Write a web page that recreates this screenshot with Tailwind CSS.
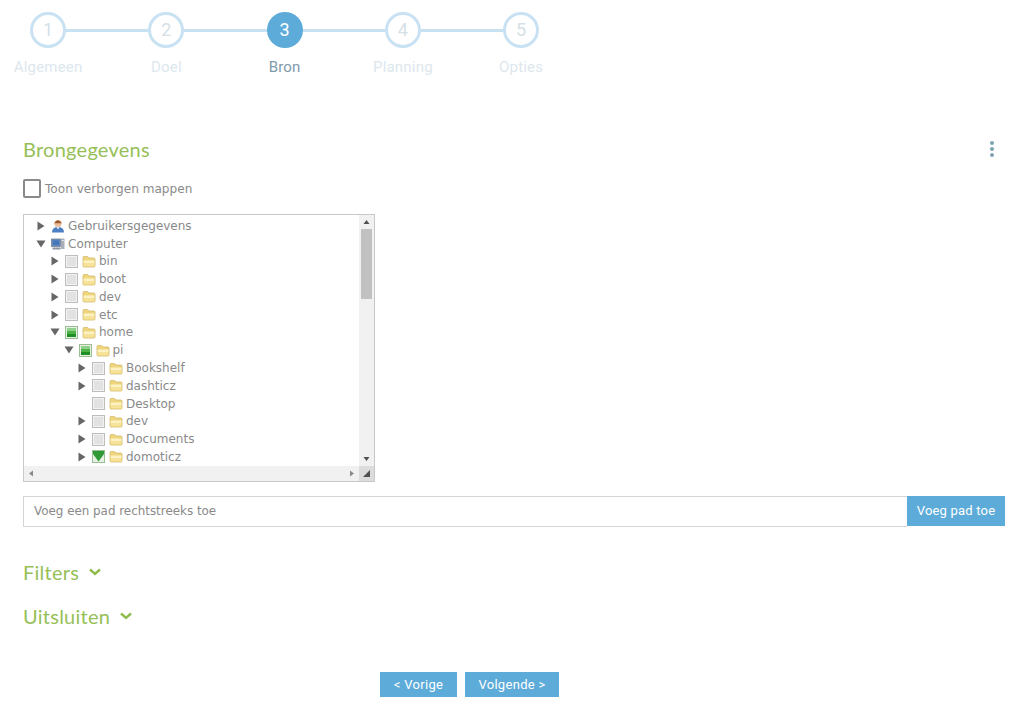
<!DOCTYPE html>
<html lang="nl">
<head>
    <meta charset="UTF-8">
    <title>Back-up taak</title>
    <script src="https://cdn.jsdelivr.net/npm/@tailwindcss/browser@4"></script>
</head>
<body class="bg-white overflow-hidden h-[706px] font-['DejaVu_Sans',sans-serif] text-[#8a8a8a]">

<!-- icon sprites -->
<svg class="hidden">
    <symbol id="folder" viewBox="0 0 14 13">
        <path d="M1 3.5 V11 a1 1 0 0 0 1 1 H12 a1 1 0 0 0 1-1 V4 a1 1 0 0 0-1-1 H7 L5.5 1.5 H2 a1 1 0 0 0-1 1z" fill="#efd67e" stroke="#d3bb6c" stroke-width="0.8"/>
        <path d="M1.6 5.5 H12.4 V8 H1.6z" fill="#fcf2c4"/>
        <path d="M1.6 8 H12.4 V11.4 H1.6z" fill="#f6e298"/>
    </symbol>
    <symbol id="closed" viewBox="0 0 10 10"><path d="M1.5 0.5 L8.5 5 L1.5 9.5z" fill="#666"/></symbol>
    <symbol id="open" viewBox="0 0 10 10"><path d="M0.5 1.5 H9.5 L5 8.5z" fill="#666"/></symbol>
    <symbol id="box" viewBox="0 0 13 13">
        <rect x="0.5" y="0.5" width="12" height="12" fill="#f2f2f2" stroke="#bdbdbd"/>
        <rect x="2" y="2" width="9" height="9" fill="#e2e2e2"/>
    </symbol>
    <symbol id="partial" viewBox="0 0 13 13">
        <rect x="0.5" y="0.5" width="12" height="12" fill="#e8f0e4" stroke="#9abd96"/>
        <rect x="2" y="2" width="9" height="3" fill="#8fd08a"/>
        <rect x="2" y="5" width="9" height="3" fill="#4db348"/>
        <rect x="2" y="8" width="9" height="3" fill="#1f8f24"/>
    </symbol>
    <symbol id="checked" viewBox="0 0 13 13">
        <rect x="0.5" y="0.5" width="12" height="12" fill="#e8f0e4" stroke="#9abd96"/>
        <path d="M1 1 H12 V4 L6.5 11.5 L1 4z" fill="#2f9a35"/>
    </symbol>
</svg>

<!-- Stepper -->
<div class="flex -ml-[11px] pt-3 font-['Roboto',sans-serif]">
    <div class="w-[118.25px] flex flex-col items-center relative">
        <div class="absolute top-[17px] left-1/2 w-full h-[3px] bg-[#c9e2f3]"></div>
        <div class="relative w-9 h-9 rounded-full border-[3px] border-[#c9e2f3] bg-white flex items-center justify-center text-lg text-[#d5dfe6]">1</div>
        <div class="mt-[9px] text-[15px] leading-5 tracking-[0.2px] text-[#dde7ee]">Algemeen</div>
    </div>
    <div class="w-[118.25px] flex flex-col items-center relative">
        <div class="absolute top-[17px] left-1/2 w-full h-[3px] bg-[#c9e2f3]"></div>
        <div class="relative w-9 h-9 rounded-full border-[3px] border-[#c9e2f3] bg-white flex items-center justify-center text-lg text-[#d5dfe6]">2</div>
        <div class="mt-[9px] text-[15px] leading-5 tracking-[0.2px] text-[#dde7ee]">Doel</div>
    </div>
    <div class="w-[118.25px] flex flex-col items-center relative">
        <div class="absolute top-[17px] left-1/2 w-full h-[3px] bg-[#c9e2f3]"></div>
        <div class="relative w-9 h-9 rounded-full bg-[#5dabd9] flex items-center justify-center text-lg text-white">3</div>
        <div class="mt-[9px] text-[15px] leading-5 tracking-[0.2px] text-[#7f9aab]">Bron</div>
    </div>
    <div class="w-[118.25px] flex flex-col items-center relative">
        <div class="absolute top-[17px] left-1/2 w-full h-[3px] bg-[#c9e2f3]"></div>
        <div class="relative w-9 h-9 rounded-full border-[3px] border-[#c9e2f3] bg-white flex items-center justify-center text-lg text-[#d5dfe6]">4</div>
        <div class="mt-[9px] text-[15px] leading-5 tracking-[0.2px] text-[#dde7ee]">Planning</div>
    </div>
    <div class="w-[118.25px] flex flex-col items-center relative">
        <div class="relative w-9 h-9 rounded-full border-[3px] border-[#c9e2f3] bg-white flex items-center justify-center text-lg text-[#d5dfe6]">5</div>
        <div class="mt-[9px] text-[15px] leading-5 tracking-[0.2px] text-[#dde7ee]">Opties</div>
    </div>
</div>

<div class="pl-[23px] pr-[19px]">

    <!-- Title -->
    <div class="flex items-center justify-between mt-[58px] h-7">
        <h2 class="text-[20px] text-[#96bf58] font-['Lato',sans-serif] tracking-[0.25px]">Brongegevens</h2>
        <svg class="w-[6px] h-[18px] mr-[10px]" viewBox="0 0 6 18" fill="#7fa3b3">
            <circle cx="3" cy="3" r="2"/><circle cx="3" cy="9" r="2"/><circle cx="3" cy="15" r="2"/>
        </svg>
    </div>

    <!-- Hidden folders -->
    <div class="flex items-center gap-[4px] mt-[16px] h-[19px] text-[12.1px]">
        <div class="w-[18px] h-[19px] border-2 border-[#8a8a8a] rounded-[2px]"></div>
        <span class="pt-[2px]">Toon verborgen mappen</span>
    </div>

    <!-- Tree -->
    <div class="relative mt-[16px] w-[352px] h-[268px] border border-[#c8c8c8] overflow-hidden text-[12px]">
        <div class="pt-[2px]">
            <div class="h-[17.77px] flex items-center pl-[12px]">
                <svg class="w-[10px] h-[10px] mr-[5px]"><use href="#closed"/></svg>
                <svg class="w-[14px] h-[14px] mr-[3px]" viewBox="0 0 14 14">
                    <circle cx="7" cy="4.5" r="3.6" fill="#eabd98"/>
                    <path d="M3.2 4.2 Q7 -1.6 10.8 4.2z" fill="#9a5a30"/>
                    <path d="M1 13.5 Q1 8 7 8 Q13 8 13 13.5z" fill="#4d7fc4"/>
                    <path d="M5.5 8 L7 10.5 L8.5 8z" fill="#e8eef6"/>
                </svg>
                <span>Gebruikersgegevens</span>
            </div>
            <div class="h-[17.77px] flex items-center pl-[12px]">
                <svg class="w-[10px] h-[10px] mr-[5px]"><use href="#open"/></svg>
                <svg class="w-[14px] h-[14px] mr-[3px]" viewBox="0 0 14 14">
                    <rect x="0.5" y="2" width="9" height="7.5" fill="#5f8ac6" stroke="#7b828d" stroke-width="0.8"/>
                    <rect x="2" y="3.5" width="6" height="4.5" fill="#4676b8"/>
                    <rect x="10" y="1.5" width="3.5" height="10.5" fill="#a9afb8"/>
                    <rect x="10.7" y="3" width="2.1" height="1" fill="#e4e6ea"/>
                    <rect x="1.5" y="10.5" width="8" height="2" fill="#8d95a1"/>
                </svg>
                <span>Computer</span>
            </div>
            <div class="h-[17.77px] flex items-center pl-[26px]">
                <svg class="w-[10px] h-[10px] mr-[5px]"><use href="#closed"/></svg>
                <svg class="w-[13px] h-[13px] mr-[4px]"><use href="#box"/></svg>
                <svg class="w-[14px] h-[13px] mr-[3px]"><use href="#folder"/></svg>
                <span>bin</span>
            </div>
            <div class="h-[17.77px] flex items-center pl-[26px]">
                <svg class="w-[10px] h-[10px] mr-[5px]"><use href="#closed"/></svg>
                <svg class="w-[13px] h-[13px] mr-[4px]"><use href="#box"/></svg>
                <svg class="w-[14px] h-[13px] mr-[3px]"><use href="#folder"/></svg>
                <span>boot</span>
            </div>
            <div class="h-[17.77px] flex items-center pl-[26px]">
                <svg class="w-[10px] h-[10px] mr-[5px]"><use href="#closed"/></svg>
                <svg class="w-[13px] h-[13px] mr-[4px]"><use href="#box"/></svg>
                <svg class="w-[14px] h-[13px] mr-[3px]"><use href="#folder"/></svg>
                <span>dev</span>
            </div>
            <div class="h-[17.77px] flex items-center pl-[26px]">
                <svg class="w-[10px] h-[10px] mr-[5px]"><use href="#closed"/></svg>
                <svg class="w-[13px] h-[13px] mr-[4px]"><use href="#box"/></svg>
                <svg class="w-[14px] h-[13px] mr-[3px]"><use href="#folder"/></svg>
                <span>etc</span>
            </div>
            <div class="h-[17.77px] flex items-center pl-[26px]">
                <svg class="w-[10px] h-[10px] mr-[5px]"><use href="#open"/></svg>
                <svg class="w-[13px] h-[13px] mr-[4px]"><use href="#partial"/></svg>
                <svg class="w-[14px] h-[13px] mr-[3px]"><use href="#folder"/></svg>
                <span>home</span>
            </div>
            <div class="h-[17.77px] flex items-center pl-[39.5px]">
                <svg class="w-[10px] h-[10px] mr-[5px]"><use href="#open"/></svg>
                <svg class="w-[13px] h-[13px] mr-[4px]"><use href="#partial"/></svg>
                <svg class="w-[14px] h-[13px] mr-[3px]"><use href="#folder"/></svg>
                <span>pi</span>
            </div>
            <div class="h-[17.77px] flex items-center pl-[53px]">
                <svg class="w-[10px] h-[10px] mr-[5px]"><use href="#closed"/></svg>
                <svg class="w-[13px] h-[13px] mr-[4px]"><use href="#box"/></svg>
                <svg class="w-[14px] h-[13px] mr-[3px]"><use href="#folder"/></svg>
                <span>Bookshelf</span>
            </div>
            <div class="h-[17.77px] flex items-center pl-[53px]">
                <svg class="w-[10px] h-[10px] mr-[5px]"><use href="#closed"/></svg>
                <svg class="w-[13px] h-[13px] mr-[4px]"><use href="#box"/></svg>
                <svg class="w-[14px] h-[13px] mr-[3px]"><use href="#folder"/></svg>
                <span>dashticz</span>
            </div>
            <div class="h-[17.77px] flex items-center pl-[68px]">
                <svg class="w-[13px] h-[13px] mr-[4px]"><use href="#box"/></svg>
                <svg class="w-[14px] h-[13px] mr-[3px]"><use href="#folder"/></svg>
                <span>Desktop</span>
            </div>
            <div class="h-[17.77px] flex items-center pl-[53px]">
                <svg class="w-[10px] h-[10px] mr-[5px]"><use href="#closed"/></svg>
                <svg class="w-[13px] h-[13px] mr-[4px]"><use href="#box"/></svg>
                <svg class="w-[14px] h-[13px] mr-[3px]"><use href="#folder"/></svg>
                <span>dev</span>
            </div>
            <div class="h-[17.77px] flex items-center pl-[53px]">
                <svg class="w-[10px] h-[10px] mr-[5px]"><use href="#closed"/></svg>
                <svg class="w-[13px] h-[13px] mr-[4px]"><use href="#box"/></svg>
                <svg class="w-[14px] h-[13px] mr-[3px]"><use href="#folder"/></svg>
                <span>Documents</span>
            </div>
            <div class="h-[17.77px] flex items-center pl-[53px]">
                <svg class="w-[10px] h-[10px] mr-[5px]"><use href="#closed"/></svg>
                <svg class="w-[13px] h-[13px] mr-[4px]"><use href="#checked"/></svg>
                <svg class="w-[14px] h-[13px] mr-[3px]"><use href="#folder"/></svg>
                <span>domoticz</span>
            </div>
        </div>

        <!-- vertical scrollbar -->
        <div class="absolute top-0 right-0 bottom-[15px] w-[15px] bg-[#f1f1f1] flex flex-col items-center">
            <svg class="w-[7px] h-[14px] shrink-0" viewBox="0 0 7 14"><path d="M0.5 9 L3.5 5 L6.5 9z" fill="#505050"/></svg>
            <div class="w-[11px] h-[70px] bg-[#c1c1c1]"></div>
            <svg class="w-[7px] h-[14px] mt-auto shrink-0" viewBox="0 0 7 14"><path d="M0.5 5 L3.5 9 L6.5 5z" fill="#505050"/></svg>
        </div>
        <!-- horizontal scrollbar -->
        <div class="absolute left-0 right-0 bottom-0 h-[15px] bg-[#f1f1f1] flex items-center justify-between">
            <svg class="w-[14px] h-[7px]" viewBox="0 0 14 7"><path d="M9 0.5 L5 3.5 L9 6.5z" fill="#8a8a8a"/></svg>
            <div class="flex items-center">
                <svg class="w-[14px] h-[7px]" viewBox="0 0 14 7"><path d="M5 0.5 L9 3.5 L5 6.5z" fill="#8a8a8a"/></svg>
                <div class="w-[15px] h-[15px] bg-[#dcdcdc] flex items-center justify-center">
                    <svg class="w-[9px] h-[9px]" viewBox="0 0 9 9"><path d="M8 1 V8 H1z" fill="#505050"/></svg>
                </div>
            </div>
        </div>
    </div>

    <!-- Add path -->
    <div class="flex mt-[14px] items-start">
        <div class="flex-1 h-[31px] border border-[#d4d4d4] border-r-0 flex items-center pl-[10px] text-[11.9px]">Voeg een pad rechtstreeks toe</div>
        <button class="w-[98px] h-[30px] bg-[#5dabd9] text-white text-[13px] tracking-[0.2px] font-['Roboto',sans-serif]">Voeg pad toe</button>
    </div>

    <!-- Collapsible sections -->
    <div class="flex items-center gap-[10px] mt-[31px] h-7 text-[20px] text-[#96bf58] font-['Lato',sans-serif] tracking-[0.25px]">
        <span>Filters</span>
        <svg class="w-3 h-2" viewBox="0 0 12 8" fill="none" stroke="#8fbc4b" stroke-width="2.4"><path d="M1 1.5 L6 6 L11 1.5"/></svg>
    </div>
    <div class="flex items-center gap-[10px] mt-[16px] h-7 text-[20px] text-[#96bf58] font-['Lato',sans-serif] tracking-[0.25px]">
        <span>Uitsluiten</span>
        <svg class="w-3 h-2" viewBox="0 0 12 8" fill="none" stroke="#8fbc4b" stroke-width="2.4"><path d="M1 1.5 L6 6 L11 1.5"/></svg>
    </div>

    <!-- Wizard buttons -->
    <div class="flex gap-2 mt-[42px] ml-[357px] text-[13px] tracking-[0.3px] text-white font-['Roboto',sans-serif]">
        <button class="w-[77px] h-[25px] bg-[#5dabd9]">&lt; Vorige</button>
        <button class="w-[94px] h-[25px] bg-[#5dabd9]">Volgende &gt;</button>
    </div>
</div>

</body>
</html>
